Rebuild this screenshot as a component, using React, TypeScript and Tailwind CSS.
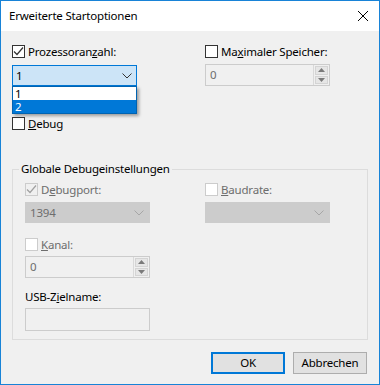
import React from 'react';

type CheckProps = { checked?: boolean; disabled?: boolean };

const Check: React.FC<CheckProps> = ({ checked, disabled }) => (
  <div
    className={`w-[13px] h-[13px] border flex items-center justify-center shrink-0 ${
      disabled ? 'border-[#cccccc]' : 'border-[#333333]'
    } ${disabled && checked ? 'bg-[#f0f0f0]' : 'bg-white'}`}
  >
    {checked && (
      <svg width="11" height="11" viewBox="0 0 11 11">
        <path d="M1 5.5 L4 8.5 L10 1.5" fill="none" stroke={disabled ? '#a0a0a0' : '#333333'} strokeWidth="1.2" />
      </svg>
    )}
  </div>
);

const Chevron: React.FC<{ color: string }> = ({ color }) => (
  <svg width="10" height="6" viewBox="0 0 10 6">
    <path d="M0.5 0.5 L5 5 L9.5 0.5" fill="none" stroke={color} strokeWidth="1" />
  </svg>
);

// disabled numeric up/down box
const Spin: React.FC<{ value: string }> = ({ value }) => (
  <div className="w-[125px] h-[22px] border border-[#cccccc] bg-[#f0f0f0] flex">
    <div className="flex-1 pl-[4px] flex items-center text-[#6d6d6d]">{value}</div>
    <div className="w-[16px] flex flex-col gap-[1px] p-[1px] border-l border-[#d9d9d9]">
      <div className="flex-1 bg-[#e6e6e6] border border-[#d4d4d4] flex items-center justify-center">
        <svg width="7" height="4" viewBox="0 0 7 4">
          <path d="M0 4 L3.5 0 L7 4 Z" fill="#7a7a7a" />
        </svg>
      </div>
      <div className="flex-1 bg-[#e6e6e6] border border-[#d4d4d4] flex items-center justify-center">
        <svg width="7" height="4" viewBox="0 0 7 4">
          <path d="M0 0 L3.5 4 L7 0 Z" fill="#7a7a7a" />
        </svg>
      </div>
    </div>
  </div>
);

const DisabledCombo: React.FC<{ value?: string }> = ({ value }) => (
  <div className="w-[125px] h-[21px] bg-[#cccccc] border border-[#cccccc] flex items-center justify-between pl-[4px] pr-[5px] text-[#6d6d6d]">
    <span>{value}</span>
    <Chevron color="#a6a6a6" />
  </div>
);

export default function App() {
  return (
    <div className="w-[380px] h-[385px] border border-[#1883d7] flex flex-col font-['Noto_Sans',sans-serif] text-[11.5px] tracking-[-0.2px] leading-[16px] text-black">
      <div className="h-[30px] bg-white flex items-center justify-between pl-[8px] pr-[11px] shrink-0">
        <span>Erweiterte Startoptionen</span>
        <svg width="10" height="10" viewBox="0 0 10 10">
          <path d="M0 0 L10 10 M10 0 L0 10" stroke="#000000" strokeWidth="1" />
        </svg>
      </div>

      <div className="flex-1 bg-[#f0f0f0] pl-[11px] pt-[14px]">
        <div className="flex">
          {/* left column */}
          <div className="w-[193px]">
            <div className="h-[13px] flex items-center gap-[3px]">
              <Check checked />
              <span>
                Prozessoran<u>z</u>ahl:
              </span>
            </div>
            <div className="relative mt-[7px] w-[125px] h-[21px] border border-[#0078d7] bg-[#cce4f7] flex items-center justify-between pl-[3px] pr-[4px]">
              <span>1</span>
              <Chevron color="#333333" />
              {/* open dropdown list */}
              <div className="absolute left-[-1px] top-[20px] w-[125px] border border-[#0063b1] bg-white shadow-[2px_2px_3px_rgba(0,0,0,0.35)] z-10">
                <div className="h-[13px] leading-[13px] pl-[2px]">1</div>
                <div className="h-[13px] leading-[13px] pl-[2px] bg-[#0078d7] text-white">2</div>
              </div>
            </div>
            <div className="mt-[31px] h-[13px] flex items-center gap-[3px]">
              <Check />
              <span>
                <u>D</u>ebug
              </span>
            </div>
          </div>

          {/* right column */}
          <div>
            <div className="h-[13px] flex items-center gap-[3px]">
              <Check />
              <span>
                Ma<u>x</u>imaler Speicher:
              </span>
            </div>
            <div className="mt-[6px]">
              <Spin value="0" />
            </div>
          </div>
        </div>

        <fieldset className="mt-[31px] w-[356px] border border-[#dcdcdc]">
          <legend className="ml-[6px] px-[2px] h-[16px] leading-[16px]">Globale Debugeinstellungen</legend>
          <div className="pl-[12px] pt-[6px] pb-[8px]">
            <div className="flex">
              <div className="w-[180px]">
                <div className="h-[13px] flex items-center gap-[3px] text-[#6d6d6d]">
                  <Check checked disabled />
                  <span>
                    D<u>e</u>bugport:
                  </span>
                </div>
                <div className="mt-[6px]">
                  <DisabledCombo value="1394" />
                </div>
              </div>
              <div>
                <div className="h-[13px] flex items-center gap-[3px] text-[#6d6d6d]">
                  <Check disabled />
                  <span>
                    <u>B</u>audrate:
                  </span>
                </div>
                <div className="mt-[6px]">
                  <DisabledCombo />
                </div>
              </div>
            </div>

            <div className="mt-[15px] h-[13px] flex items-center gap-[3px] text-[#6d6d6d]">
              <Check disabled />
              <span>
                <u>K</u>anal:
              </span>
            </div>
            <div className="mt-[5px]">
              <Spin value="0" />
            </div>

            <div className="mt-[11px]">
              USB-Z<u>i</u>elname:
            </div>
            <div className="mt-[3px] w-[125px] h-[23px] border border-[#cccccc] bg-[#f0f0f0]" />
          </div>
        </fieldset>

        <div className="mt-[12px] w-[355px] flex justify-end gap-[8px]">
          <button className="w-[74px] h-[22px] bg-[#e1e1e1] border-2 border-[#0078d7] flex items-center justify-center">
            OK
          </button>
          <button className="w-[74px] h-[22px] bg-[#e1e1e1] border border-[#adadad] flex items-center justify-center">
            Abbrechen
          </button>
        </div>
      </div>
    </div>
  );
}
